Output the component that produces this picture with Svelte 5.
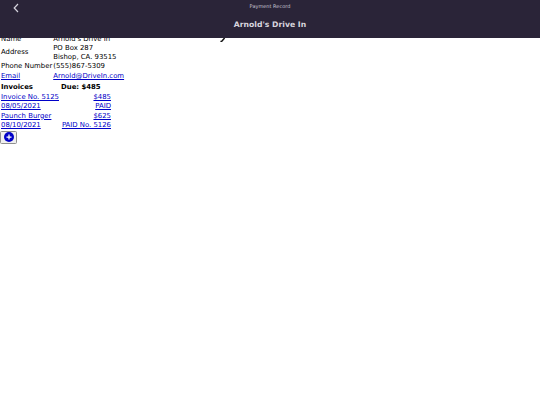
<script>
  const invoices = [
    ['Invoice No. 5125', '$485'],
    ['08/05/2021', 'PAID'],
    ['Paunch Burger', '$625'],
    ['08/10/2021', 'PAID No. 5126']
  ];
</script>

<header class="bar">
  <svg class="back" viewBox="0 0 6 10" width="6" height="10" aria-hidden="true">
    <path d="M5 1 L1.2 5 L5 9" fill="none" stroke="#d6d4de" stroke-width="1.2" />
  </svg>
  <div class="sub">Payment Record</div>
  <div class="title">Arnold's Drive In</div>
</header>

<svg class="mark" viewBox="0 0 6 4" width="6" height="4" aria-hidden="true">
  <path d="M4.6 0 L1.6 3.4 L0.4 3.4" fill="none" stroke="#111" stroke-width="1.5" />
</svg>

<main>
  <table class="info">
    <tbody>
      <tr><td>Name</td><td>Arnold's Drive In</td></tr>
      <tr><td>Address</td><td>PO Box 287<br />Bishop, CA. 93515</td></tr>
      <tr><td>Phone Number</td><td>(555)867-5309</td></tr>
      <tr><td><a href="#e">Email</a></td><td><a href="#e">Arnold@DriveIn.com</a></td></tr>
    </tbody>
  </table>
  <table class="inv">
    <thead>
      <tr><th>Invoices</th><th>Due: $485</th></tr>
    </thead>
    <tbody>
      {#each invoices as row}
        <tr><td><a href="#i">{row[0]}</a></td><td class="r"><a href="#i">{row[1]}</a></td></tr>
      {/each}
    </tbody>
  </table>
  <button class="add" aria-label="Add">
    <svg viewBox="0 0 12 12" width="10" height="10" aria-hidden="true">
      <circle cx="6" cy="6" r="6" fill="#0000c8" />
      <path d="M6 3v6M3 6h6" stroke="#fff" stroke-width="1.5" />
    </svg>
  </button>
</main>

<style>
  :global(body) {
    margin: 0;
    background: #fff;
    font-family: "DejaVu Sans", sans-serif;
    font-size: 6.9px;
    color: #000;
    text-rendering: geometricPrecision;
  }
  .bar {
    position: absolute;
    top: 0;
    left: 0;
    right: 0;
    height: 38px;
    background: #2a2438;
    color: #fff;
    text-align: center;
    z-index: 2;
  }
  .back {
    position: absolute;
    left: 13px;
    top: 3px;
  }
  .sub {
    padding-top: 4px;
    font-size: 5px;
    line-height: 7px;
    color: #c9c6d2;
  }
  .title {
    margin-top: 8.5px;
    font-size: 7.7px;
    font-weight: bold;
    line-height: 10px;
    color: #d8d6de;
  }
  .mark {
    position: absolute;
    left: 220px;
    top: 38px;
  }
  main {
    padding-top: 33.5px;
  }
  table {
    border-collapse: separate;
    border-spacing: 1px;
    font-size: 6.9px;
  }
  td, th {
    padding: 0;
    line-height: 8.6px;
    text-align: left;
  }
  .inv {
    margin-top: 0.5px;
  }
  .inv th {
    font-weight: bold;
  }
  .inv th:first-child {
    width: 59px;
  }
  .inv th:last-child {
    width: 50px;
  }
  .r {
    text-align: right;
  }
  a {
    color: #0000c8;
  }
  .add {
    display: flex;
    align-items: center;
    justify-content: center;
    width: 17px;
    height: 13px;
    padding: 0;
    background: #efefef;
    border: 1px solid #8f8f8f;
    border-radius: 1.5px;
  }
</style>
